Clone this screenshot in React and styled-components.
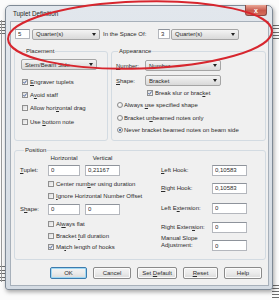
import React from 'react';
import styled, { createGlobalStyle } from 'styled-components';

const Global = createGlobalStyle`
  html, body { margin: 0; padding: 0; background: #fff; }
  body { font-family: "Liberation Sans", Arial, sans-serif; font-size: 6px; color: #2b2b2b; }
`;

const Page = styled.div`
  position: relative;
  width: 279px;
  height: 300px;
  overflow: hidden;
  box-sizing: border-box;
  padding: 5px 0 0 5px;
  background: #fbfbfb;
`;

const Backdrop = styled.svg`
  position: absolute;
  left: 0;
  top: 0;
`;

const Annotation = styled.svg`
  position: absolute;
  left: 0;
  top: 0;
  pointer-events: none;
`;

const Window = styled.div`
  position: relative;
  width: 268px;
  height: 285px;
  box-sizing: border-box;
  display: flex;
  flex-direction: column;
  padding: 0 3px 3px 4px;
  border: 1px solid #7f8a96;
  border-radius: 5px 5px 3px 3px;
  background: linear-gradient(#e2e7ed, #d4dbe3);
  box-shadow: 1px 2px 4px rgba(0, 0, 0, 0.35);
`;

const TitleBar = styled.div`
  height: 15px;
  display: flex;
  justify-content: space-between;
  align-items: flex-start;
`;

const Title = styled.span`
  padding-left: 3px;
  line-height: 15px;
  font-size: 6.3px;
  color: #1c1c1c;
`;

const Close = styled.div`
  width: 22px;
  height: 11px;
  margin: -1px 2px 0 0;
  box-sizing: border-box;
  display: flex;
  align-items: center;
  justify-content: center;
  border: 1px solid #8c4a44;
  border-top: none;
  border-radius: 0 0 3px 3px;
  background: linear-gradient(#e9a797, #c9584c 55%, #d66c5c);
  color: #fff;
  font-size: 7px;
  font-weight: bold;
`;

const Client = styled.div`
  flex: 1;
  display: flex;
  flex-direction: column;
  border: 1px solid #a7b0ba;
  background: #f0f0f0;
  padding-top: 7px;
`;

const TopRow = styled.div`
  height: 10px;
  margin-left: 4px;
  display: flex;
  align-items: center;
`;

const Field = styled.input`
  box-sizing: border-box;
  width: ${p => p.$w}px;
  height: ${p => p.$h || 11}px;
  margin: 0 0 0 ${p => p.$ml || 0}px;
  padding: 0 2px;
  border: 1px solid #b4b7bd;
  border-top-color: #8e939b;
  background: #fff;
  font: 6px "Liberation Sans", Arial, sans-serif;
  color: #2b2b2b;
  outline: none;
`;

const Combo = styled.div`
  box-sizing: border-box;
  width: ${p => p.$w}px;
  height: 11px;
  margin-left: ${p => p.$ml || 0}px;
  padding: 0 3px;
  display: flex;
  align-items: center;
  justify-content: space-between;
  border: 1px solid #a5a5a5;
  border-radius: 2px;
  background: linear-gradient(#f4f4f4, #e6e6e6 50%, #d9d9d9);
`;

const Arrow = styled.span`
  width: 0;
  height: 0;
  border-left: 2px solid transparent;
  border-right: 2px solid transparent;
  border-top: 3px solid #222;
`;

const Label = styled.span`
  width: ${p => p.$w ? `${p.$w}px` : 'auto'};
  margin-left: ${p => p.$ml || 0}px;
  flex-shrink: 0;
  white-space: nowrap;
`;

const Groups = styled.div`
  display: flex;
  gap: 3px;
  margin: 9px 0 0 3px;
`;

const Group = styled.fieldset`
  box-sizing: border-box;
  width: ${p => p.$w}px;
  height: ${p => p.$h}px;
  min-width: 0;
  margin: ${p => p.$mt || 0}px 0 0 ${p => p.$ml || 0}px;
  padding: 0 0 0 ${p => p.$pl}px;
  border: 1px solid #d3dbe2;
  border-radius: 3px;
`;

const Legend = styled.legend`
  height: 6px;
  margin-left: ${p => p.$ml}px;
  padding: 0 1px;
  font-size: 6px;
  line-height: 6px;
`;

const Row = styled.div`
  height: ${p => p.$h || 12}px;
  margin-top: ${p => p.$mt || 0}px;
  margin-left: ${p => p.$ml || 0}px;
  display: flex;
  align-items: ${p => p.$align || 'center'};
  gap: ${p => p.$gap || 0}px;
  white-space: nowrap;
`;

const Box = styled.span`
  width: 6px;
  height: 6px;
  flex-shrink: 0;
  box-sizing: border-box;
  display: flex;
  border: 1px solid #8f8f8f;
  background: linear-gradient(135deg, #dcdcdc, #f8f8f8);
`;

const Radio = styled.span`
  width: 6px;
  height: 6px;
  flex-shrink: 0;
  box-sizing: border-box;
  display: flex;
  align-items: center;
  justify-content: center;
  border: 1px solid #8c8c8c;
  border-radius: 50%;
  background: radial-gradient(circle at 40% 40%, #fff, #d6d6d6);

  &::after {
    content: '';
    display: ${p => (p.$on ? 'block' : 'none')};
    width: 2px;
    height: 2px;
    border-radius: 50%;
    background: #1f4f9a;
  }
`;

const Columns = styled.div`
  display: flex;
`;

const Column = styled.div`
  width: ${p => p.$w ? `${p.$w}px` : 'auto'};
  display: flex;
  flex-direction: column;
`;

const Head = styled.span`
  width: ${p => p.$w}px;
  margin-left: ${p => p.$ml || 0}px;
  text-align: center;
`;

const Stack = styled.span`
  width: 51px;
  line-height: 7px;
  align-self: flex-start;
`;

const Buttons = styled.div`
  height: 12px;
  margin-top: 7px;
  padding-right: 6px;
  display: flex;
  justify-content: flex-end;
  gap: 6px;
`;

const Button = styled.button`
  box-sizing: border-box;
  width: ${p => p.$w}px;
  height: 12px;
  padding: 0;
  border: 1px solid ${p => (p.$primary ? '#3d7bad' : '#8a8a8a')};
  border-radius: 2px;
  background: linear-gradient(#f3f3f3, #ebebeb 50%, #dadada);
  box-shadow: ${p => (p.$primary ? 'inset 0 0 0 1px #9fd8f4' : 'inset 0 0 0 1px #fbfbfb')};
  font: 6px "Liberation Sans", Arial, sans-serif;
  color: #2b2b2b;
`;

const Tick = () => (
  <svg width="4" height="4" viewBox="0 0 4 4" style={{ margin: 'auto' }}>
    <path d="M0.4 2.1 L1.5 3.3 L3.6 0.5" fill="none" stroke="#3a5796" strokeWidth="0.9" />
  </svg>
);

function Check({ checked, children, ...row }) {
  return (
    <Row $gap={2} {...row}>
      <Box>{checked && <Tick />}</Box>
      <span>{children}</span>
    </Row>
  );
}

function Option({ on, children, ...row }) {
  return (
    <Row $gap={1} {...row}>
      <Radio $on={on} />
      <span>{children}</span>
    </Row>
  );
}

function Select({ value, w, ml }) {
  return (
    <Combo $w={w} $ml={ml}>
      <span>{value}</span>
      <Arrow />
    </Combo>
  );
}

const staves = [
  { x1: 0, x2: 6, ys: [21, 24, 27, 30, 33] },
  { x1: 0, x2: 6, ys: [266, 270, 273, 277, 280] },
  { x1: 272, x2: 279, ys: [25, 28, 32, 35, 38] },
  { x1: 272, x2: 279, ys: [285, 288, 291, 294, 297] },
];

export default function App() {
  return (
    <Page>
      <Global />
      <Backdrop width="279" height="300">
        {staves.map((s, i) =>
          s.ys.map(y => (
            <line key={`${i}-${y}`} x1={s.x1} x2={s.x2} y1={y + 0.5} y2={y + 0.5} stroke="#6d6d6d" strokeWidth="1" />
          ))
        )}
        <line x1="1.5" x2="1.5" y1="20" y2="282" stroke="#9a9a9a" strokeWidth="1" />
      </Backdrop>

      <Window>
        <TitleBar>
          <Title>Tuplet Definition</Title>
          <Close>x</Close>
        </TitleBar>
        <Client>
          <TopRow>
            <Field $w={15} $h={10} defaultValue="5" readOnly />
            <Select w={68} ml={2} value="Quarter(s)" />
            <Label $w={55} $ml={3}>In the Space Of:</Label>
            <Field $w={12} $h={10} defaultValue="3" readOnly />
            <Select w={68} ml={1} value="Quarter(s)" />
          </TopRow>

          <Groups>
            <Group $w={94} $h={93} $pl={6}>
              <Legend $ml={4}>Placement</Legend>
              <Row $mt={5} $h={11}>
                <Select w={76} value="Stem/Beam Side" />
              </Row>
              <Check checked $mt={5} $h={13} $ml={1}><u>E</u>ngraver tuplets</Check>
              <Check checked $h={13} $ml={1}>A<u>v</u>oid staff</Check>
              <Check $h={14} $ml={1}>Allow hori<u>z</u>ontal drag</Check>
              <Check $h={13} $ml={1}>Use <u>b</u>ottom note</Check>
            </Group>

            <Group $w={155} $h={93} $pl={4}>
              <Legend $ml={2}>Appearance</Legend>
              <Row $mt={6} $h={11}>
                <Label $w={29}><u>N</u>umber:</Label>
                <Select w={76} value="Number" />
              </Row>
              <Row $mt={4} $h={11}>
                <Label $w={29}><u>S</u>hape:</Label>
                <Select w={76} value="Bracket" />
              </Row>
              <Check checked $mt={1} $ml={31}>Break slur or brac<u>k</u>et</Check>
              <Option $ml={1}>Always <u>u</u>se specified shape</Option>
              <Option $mt={1} $ml={1}>Bracket u<u>n</u>beamed notes only</Option>
              <Option on $ml={1}>Never bracket beamed notes on beam side</Option>
            </Group>
          </Groups>

          <Group $w={252} $h={113} $pl={5} $mt={6} $ml={3}>
            <Legend $ml={4}>Position</Legend>
            <Columns>
              <Column $w={141}>
                <Row $h={9}>
                  <Head $w={32} $ml={28}>Horizontal</Head>
                  <Head $w={35} $ml={5}>Vertical</Head>
                </Row>
                <Row $mt={2}>
                  <Label $w={28}><u>T</u>uplet:</Label>
                  <Field $w={32} defaultValue="0" readOnly />
                  <Field $w={35} $ml={5} defaultValue="0,21167" readOnly />
                </Row>
                <Check $mt={2} $ml={28}>Center num<u>b</u>er using duration</Check>
                <Check $ml={28}><u>I</u>gnore Horizontal Number Offset</Check>
                <Row $mt={1}>
                  <Label $w={28}>S<u>h</u>ape:</Label>
                  <Field $w={32} defaultValue="0" readOnly />
                  <Field $w={35} $ml={5} defaultValue="0" readOnly />
                </Row>
                <Check $mt={3} $ml={28}>Al<u>w</u>ays flat</Check>
                <Check $h={11} $ml={28}>Bracket <u>f</u>ull duration</Check>
                <Check checked $ml={28}>Ma<u>t</u>ch length of hooks</Check>
              </Column>
              <Column>
                <Row $mt={11}>
                  <Label $w={51}><u>L</u>eft Hook:</Label>
                  <Field $w={35} defaultValue="0,10583" readOnly />
                </Row>
                <Row $mt={6}>
                  <Label $w={51}><u>R</u>ight Hook:</Label>
                  <Field $w={35} defaultValue="0,10583" readOnly />
                </Row>
                <Row $mt={8}>
                  <Label $w={51}>Left E<u>x</u>tension:</Label>
                  <Field $w={35} defaultValue="0" readOnly />
                </Row>
                <Row $mt={7}>
                  <Label $w={51}>Right Exten<u>s</u>ion:</Label>
                  <Field $w={35} defaultValue="0" readOnly />
                </Row>
                <Row $mt={2} $h={17} $align="flex-end">
                  <Stack>Manual Slope<br />Adjustment:</Stack>
                  <Field $w={35} defaultValue="0" readOnly style={{ marginBottom: 1 }} />
                </Row>
              </Column>
            </Columns>
          </Group>

          <Buttons>
            <Button $w={37} $primary>OK</Button>
            <Button $w={38}>Cancel</Button>
            <Button $w={40}>Set <u>D</u>efault</Button>
            <Button $w={35}><u>R</u>eset</Button>
            <Button $w={38}>Help</Button>
          </Buttons>
        </Client>
      </Window>

      <Annotation width="279" height="300">
        <ellipse cx="140" cy="35" rx="132" ry="33.5" transform="rotate(-1.8 140 35)" fill="none" stroke="#d7262e" strokeWidth="2" />
      </Annotation>
    </Page>
  );
}
